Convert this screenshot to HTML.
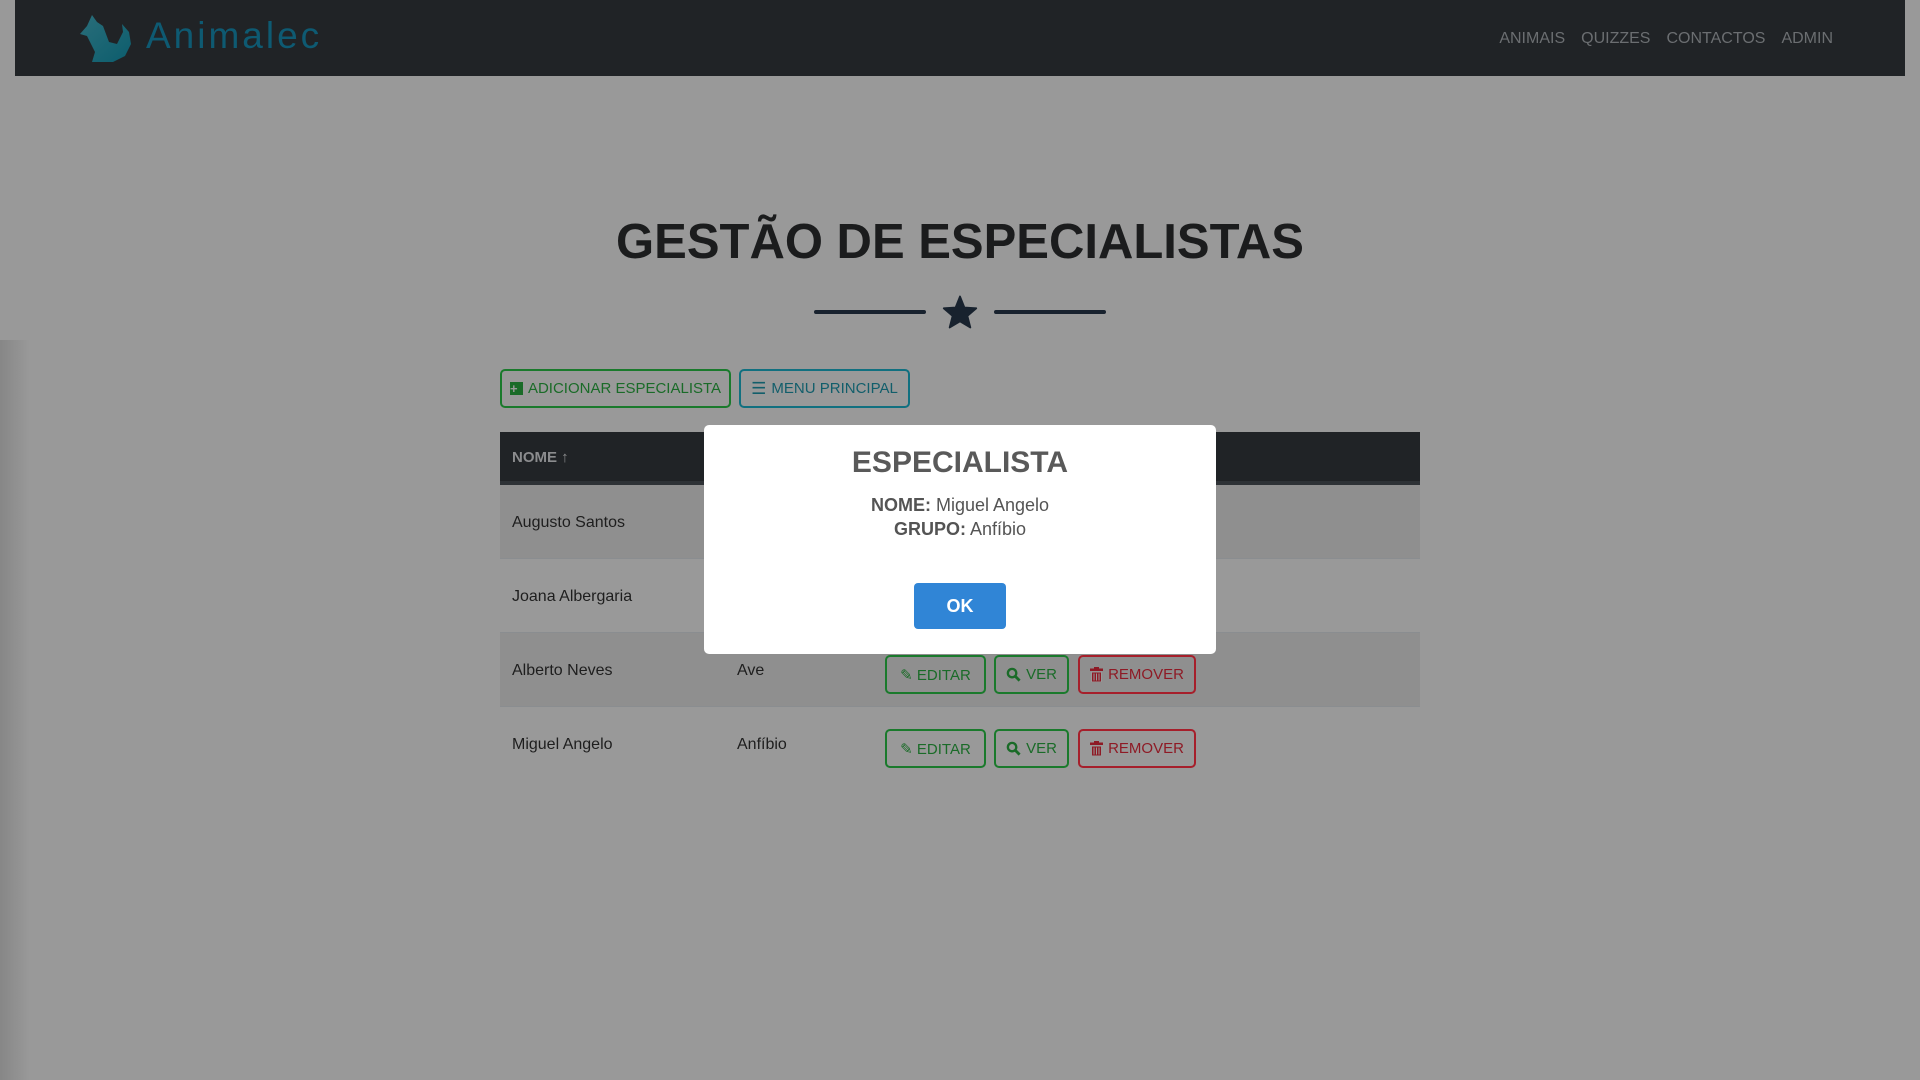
<!DOCTYPE html>
<html><head><meta charset="utf-8"><style>
*{margin:0;padding:0;box-sizing:border-box}
body{width:1920px;height:1080px;background:#999;position:relative;overflow:hidden;font-family:"Liberation Sans",sans-serif}
.shadow{position:absolute;left:0;top:340px;width:30px;height:740px;background:linear-gradient(to right,rgba(0,0,0,.12),rgba(0,0,0,0))}
.nav{position:absolute;left:15px;top:0;width:1890px;height:76px;background:#202326}
.logo{position:absolute;left:131px;top:15px;font-size:37px;color:#0e5a72;letter-spacing:3px}
.links{position:absolute;top:30px;right:72px;font-size:16px;color:#6b6e71;display:flex;gap:16px}
h1{position:absolute;top:214px;left:0;width:1920px;text-align:center;font-size:49px;font-weight:bold;color:#1b1c1d}
.line{position:absolute;top:310px;height:4px;width:112px;background:#18222e;border-radius:2px}
.btn{position:absolute;height:39px;border:2px solid;border-radius:5px;font-size:15px;display:flex;align-items:center;justify-content:center;gap:5px}
.g{border-color:#1a7a2c;color:#1a6b28}.b{border-color:#117080;color:#125e6b}.r{border-color:#a61f2b;color:#8e1a25}
.thead{position:absolute;left:500px;top:432px;width:920px;height:53px;background:#202326;border-bottom:4px solid #2e3236}
.thead span{position:absolute;left:12px;top:17px;color:#8b8c8e;font-weight:bold;font-size:15px}
.row{position:absolute;left:500px;width:920px;height:74px;border-bottom:1px solid #8a8d90;font-size:16px;color:#1e1e1e}
.row span{position:absolute;top:29px}
.modal{position:absolute;left:704px;top:425px;width:512px;height:229px;background:#fff;border-radius:5px;text-align:center}
.modal h2{margin-top:21px;font-size:30px;color:#595959;font-weight:bold}
.modal p{font-size:18px;color:#545454;line-height:24px}
.ok{position:absolute;left:210px;top:158px;width:92px;height:46px;background:#3085d6;color:#fff;font-weight:bold;font-size:18px;border-radius:4px;display:flex;align-items:center;justify-content:center}
</style></head><body>
<div class="shadow"></div>
<div class="nav">
<svg style="position:absolute;left:64px;top:14px" width="54" height="50" viewBox="0 0 54 50"><defs><linearGradient id="lg" x1="0" y1="0" x2="1" y2="1"><stop offset="0" stop-color="#2a6e7a"/><stop offset="1" stop-color="#0c5d6d"/></linearGradient></defs><path d="M13 1 L18 8 L24 12 L30 28 L38 30 L44 18 L43 10 L50 18 L52 30 L46 42 L34 48 L13 48 L16 38 L12 30 L8 22 L1 20 L8 12 Z" fill="url(#lg)"/></svg>
<div class="logo">Animalec</div>
<div class="links"><span>ANIMAIS</span><span>QUIZZES</span><span>CONTACTOS</span><span>ADMIN</span></div>
</div>
<h1>GESTÃO DE ESPECIALISTAS</h1>
<div class="line" style="left:814px"></div><div class="line" style="left:994px"></div>
<svg style="position:absolute;left:942px;top:295px" width="36" height="34" viewBox="0 0 24 23"><path d="M12 1 L15 8.5 L23 9 L17 14.2 L19 22 L12 17.8 L5 22 L7 14.2 L1 9 L9 8.5 Z" fill="#18222e" stroke="#18222e" stroke-linejoin="round" stroke-width="1.2"/></svg>
<div class="btn g" style="left:500px;top:369px;width:231px"><span style="display:inline-block;width:13px;height:13px;background:#1a6b28;color:#999;font-size:13px;line-height:13px;font-weight:bold">+</span>ADICIONAR ESPECIALISTA</div>
<div class="btn b" style="left:739px;top:369px;width:171px"><span style="font-size:17px">☰</span>MENU PRINCIPAL</div>
<div class="thead"><span>NOME ↑</span></div>
<div class="row" style="top:485px;background:#8f8f8f"><span style="left:12px">Augusto Santos</span></div>
<div class="row" style="top:559px"><span style="left:12px">Joana Albergaria</span></div>
<div class="row" style="top:633px;background:#8f8f8f"><span style="left:12px">Alberto Neves</span><span style="left:237px">Ave</span></div>
<div class="row" style="top:707px;border:none"><span style="left:12px">Miguel Angelo</span><span style="left:237px">Anfíbio</span></div>
<div class="btn g" style="left:885px;top:655px;width:101px">✎ EDITAR</div>
<div class="btn g" style="left:994px;top:655px;width:75px"><svg width="15" height="15" viewBox="0 0 16 16"><circle cx="6.5" cy="6.5" r="4.5" fill="none" stroke="#1a6b28" stroke-width="2.5"/><path d="M10 10 L14.5 14.5" stroke="#1a6b28" stroke-width="3"/></svg>VER</div>
<div class="btn r" style="left:1078px;top:655px;width:118px"><svg width="13" height="15" viewBox="0 0 13 15"><rect x="0" y="1.5" width="13" height="2.5" fill="#8e1a25"/><rect x="4" y="0" width="5" height="2" fill="#8e1a25"/><path d="M1.5 5 H11.5 V15 H1.5Z M4 6.5 V13.5 M6.5 6.5 V13.5 M9 6.5 V13.5" fill="#8e1a25" stroke="#999" stroke-width="1"/></svg>REMOVER</div>
<div class="btn g" style="left:885px;top:729px;width:101px">✎ EDITAR</div>
<div class="btn g" style="left:994px;top:729px;width:75px"><svg width="15" height="15" viewBox="0 0 16 16"><circle cx="6.5" cy="6.5" r="4.5" fill="none" stroke="#1a6b28" stroke-width="2.5"/><path d="M10 10 L14.5 14.5" stroke="#1a6b28" stroke-width="3"/></svg>VER</div>
<div class="btn r" style="left:1078px;top:729px;width:118px"><svg width="13" height="15" viewBox="0 0 13 15"><rect x="0" y="1.5" width="13" height="2.5" fill="#8e1a25"/><rect x="4" y="0" width="5" height="2" fill="#8e1a25"/><path d="M1.5 5 H11.5 V15 H1.5Z M4 6.5 V13.5 M6.5 6.5 V13.5 M9 6.5 V13.5" fill="#8e1a25" stroke="#999" stroke-width="1"/></svg>REMOVER</div>
<div class="modal">
<h2>ESPECIALISTA</h2>
<p style="margin-top:13px"><b>NOME:</b> Miguel Angelo</p>
<p><b>GRUPO:</b> Anfíbio</p>
<div class="ok">OK</div>
</div>
</body></html>
